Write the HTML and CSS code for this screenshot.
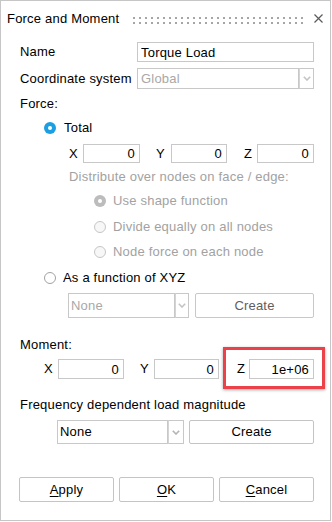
FILE: index.html
```html
<!DOCTYPE html>
<html>
<head>
<meta charset="utf-8">
<link rel="stylesheet" href="styles.css">
</head>
<body>
<div class="dialog">
  <div class="titlebar">
    <span class="title">Force and Moment</span>
    <svg class="grip" width="170" height="7" viewBox="0 0 170 7">
      <defs><pattern id="dots" width="6" height="5" patternUnits="userSpaceOnUse"><rect width="2" height="2" fill="#a6a6a6"/></pattern></defs>
      <rect width="170" height="7" fill="url(#dots)"/>
    </svg>
    <svg class="close" width="9" height="9" viewBox="0 0 9 9"><path d="M0.5 0.5 L8.5 8.5 M8.5 0.5 L0.5 8.5" stroke="#5a5a5a" stroke-width="1.2"/></svg>
  </div>
  <div class="content">
    <div class="row row-name">
      <span class="lbl lbl-wide">Name</span>
      <input class="field field-name" value="Torque Load">
    </div>
    <div class="row row-coord">
      <span class="lbl lbl-wide">Coordinate system</span>
      <div class="combo combo-coord disabled">
        <span class="combo-text">Global</span>
        <span class="combo-arrow"><svg width="8" height="5" viewBox="0 0 8 5"><path d="M0.8 0.8 L4 4 L7.2 0.8" fill="none" stroke="#c4c4c4" stroke-width="1.6"/></svg></span>
      </div>
    </div>
    <div class="row section row-force">Force:</div>
    <div class="row radio-row row-total"><span class="radio on"></span><span class="radio-lbl">Total</span></div>
    <div class="row xyz force-xyz">
      <span class="axis ax-x">X</span><input class="field num f-x" value="0">
      <span class="axis ax-y">Y</span><input class="field num f-y" value="0">
      <span class="axis ax-z">Z</span><input class="field num f-z" value="0">
    </div>
    <div class="row muted row-distribute">Distribute over nodes on face / edge:</div>
    <div class="row radio-row sub r1 muted"><span class="radio dis-on"></span><span class="radio-lbl">Use shape function</span></div>
    <div class="row radio-row sub r2 muted"><span class="radio dis"></span><span class="radio-lbl">Divide equally on all nodes</span></div>
    <div class="row radio-row sub r3 muted"><span class="radio dis"></span><span class="radio-lbl">Node force on each node</span></div>
    <div class="row radio-row row-func"><span class="radio off"></span><span class="radio-lbl">As a function of XYZ</span></div>
    <div class="row combo-row func-row">
      <div class="combo combo-func disabled">
        <span class="combo-text">None</span>
        <span class="combo-arrow"><svg width="8" height="5" viewBox="0 0 8 5"><path d="M0.8 0.8 L4 4 L7.2 0.8" fill="none" stroke="#c4c4c4" stroke-width="1.6"/></svg></span>
      </div>
      <button class="btn btn-create disabled-btn">Create</button>
    </div>
    <div class="row section row-moment">Moment:</div>
    <div class="row xyz moment-xyz">
      <span class="axis mx">X</span><input class="field num m-x" value="0">
      <span class="axis my">Y</span><input class="field num m-y" value="0">
      <span class="axis mz">Z</span><input class="field num m-z" value="1e+06">
    </div>
    <div class="row section row-freq">Frequency dependent load magnitude</div>
    <div class="row combo-row freq-row">
      <div class="combo combo-freq">
        <span class="combo-text">None</span>
        <span class="combo-arrow"><svg width="8" height="5" viewBox="0 0 8 5"><path d="M0.8 0.8 L4 4 L7.2 0.8" fill="none" stroke="#b4b4b4" stroke-width="1.6"/></svg></span>
      </div>
      <button class="btn btn-create2">Create</button>
    </div>
    <div class="row buttons">
      <button class="btn btn-main"><u>A</u>pply</button>
      <button class="btn btn-main"><u>O</u>K</button>
      <button class="btn btn-main"><u>C</u>ancel</button>
    </div>
  </div>
  <div class="highlight"></div>
</div>
</body>
</html>
```
FILE: styles.css
```css
html, body {
  margin: 0;
  background: #fff;
}
body {
  font-family: "Liberation Sans", Arial, sans-serif;
  font-size: 13px;
  letter-spacing: 0.2px;
  color: #000;
}
.dialog {
  position: relative;
  width: 331px;
  height: 521px;
  box-sizing: border-box;
  border: 1px solid #c6c6c6;
  background: #fff;
}
.titlebar {
  height: 36px;
  display: flex;
  align-items: center;
  padding: 0 7px 0 6px;
}
.title {
  line-height: 16px;
}
.grip {
  display: block;
  margin-left: auto;
  margin-top: 3px;
}
.close {
  display: block;
  margin-left: 11px;
  margin-top: -1px;
}
.content {
  padding: 0 16px 0 18px;
  display: flex;
  flex-direction: column;
}
.row {
  display: flex;
  align-items: center;
  line-height: 16px;
}
.lbl-wide {
  width: 118px;
  flex: none;
  padding-left: 1px;
  box-sizing: border-box;
  white-space: nowrap;
}
.field {
  font: inherit;
  letter-spacing: inherit;
  color: #000;
  border: 1px solid #c8c8c8;
  background: #fff;
  box-sizing: border-box;
  margin: 0;
  outline: none;
  padding: 0 3px;
}
.field.num {
  text-align: right;
  padding: 0 4px 0 2px;
  height: 19px;
}
.row-name { margin-top: 5px; height: 20px; }
.field-name { width: 177px; height: 20px; }
.row-coord { margin-top: 6px; height: 21px; }

.combo {
  display: flex;
  height: 100%;
  flex: none;
}
.combo-text {
  border: 1px solid #c8c8c8;
  box-sizing: border-box;
  display: flex;
  align-items: center;
  padding-left: 2px;
  color: #000;
}
.combo.disabled .combo-text { color: #a8a8a8; }
.combo-arrow {
  border: 1px solid #c8c8c8;
  border-left-color: #d4d4d4;
  box-sizing: border-box;
  display: flex;
  align-items: center;
  justify-content: center;
}
.combo-arrow svg { display: block; }
.combo-coord .combo-text { width: 162px; padding-left: 3px; }
.combo-coord .combo-arrow { width: 15px; }

.section { height: 16px; padding-left: 1px; }
.row-force { margin-top: 7px; }
.row-total { margin-top: 8px; height: 16px; padding-left: 25px; }

.radio {
  width: 12px;
  height: 12px;
  border-radius: 50%;
  box-sizing: border-box;
  flex: none;
  margin-right: 7px;
  position: relative;
}
.radio.on {
  background: #1c9ee2;
  margin-right: 8px;
}
.radio.on::after,
.radio.dis-on::after {
  content: "";
  position: absolute;
  left: 4px;
  top: 4px;
  width: 4px;
  height: 4px;
  border-radius: 50%;
  background: #fff;
}
.radio.dis-on {
  background: #bcbcbc;
}
.radio.dis {
  border: 1px solid #c6c6c6;
  background: #f7f7f7;
}
.radio.off {
  border: 1px solid #a2a2a2;
  background: #fff;
}
.muted { color: #a2a2a2; }

.force-xyz { margin-top: 8px; height: 19px; padding-left: 49px; }
.axis { flex: none; padding-left: 1px; box-sizing: border-box; }
.ax-x { width: 15px; }
.f-x { width: 57px; }
.ax-y { width: 16px; margin-left: 15px; }
.f-y { width: 56px; }
.ax-z { width: 14px; margin-left: 16px; }
.f-z { width: 57px; }

.row-distribute { margin-top: 6px; height: 16px; padding-left: 50px; }
.sub { padding-left: 75px; }
.r1 { margin-top: 3px; height: 26px; }
.r2 { height: 25px; }
.r3 { height: 26px; }
.row-func { height: 26px; padding-left: 25px; }

.combo-row { height: 25px; }
.func-row { margin-top: 2px; padding-left: 49px; }
.combo-func .combo-text { width: 107px; }
.combo-func .combo-arrow { width: 14px; }

.btn {
  font: inherit;
  letter-spacing: inherit;
  color: #000;
  background: #fff;
  border: 1px solid #c4c4c4;
  border-radius: 2px;
  box-sizing: border-box;
  margin: 0;
  padding: 0;
  height: 100%;
  text-align: center;
}
.btn u { text-decoration-thickness: 1px; text-underline-offset: 2px; }
.btn-create { width: 119px; margin-left: 6px; }
.disabled-btn { color: #5e5e5e; border-color: #c8c8c8; }

.row-moment { margin-top: 19px; }
.moment-xyz { margin-top: 6px; height: 20px; padding-left: 24px; }
.moment-xyz .field.num { height: 20px; }
.mx { width: 15px; }
.m-x { width: 66px; }
.my { width: 15px; margin-left: 15px; }
.m-y { width: 65px; }
.mz { width: 13px; margin-left: 17px; }
.m-z { width: 65px; }

.row-freq { margin-top: 18px; }
.freq-row { margin-top: 7px; height: 24px; padding-left: 38px; }
.combo-freq .combo-text { width: 111px; }
.combo-freq .combo-arrow { width: 16px; }
.btn-create2 { width: 125px; margin-left: 5px; }

.buttons { margin-top: 33px; height: 25px; gap: 5px; }
.btn-main { width: 95px; }

.highlight {
  position: absolute;
  left: 222px;
  top: 346px;
  width: 102px;
  height: 42px;
  box-sizing: border-box;
  border: 3px solid #ec4148;
  box-shadow: 0 1px 3px rgba(0, 0, 0, 0.35);
  pointer-events: none;
}
```
